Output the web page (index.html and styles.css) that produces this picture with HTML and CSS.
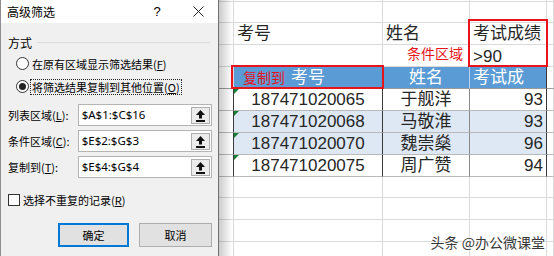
FILE: index.html
```html
<!DOCTYPE html>
<html lang="zh-CN">
<head>
    <meta charset="UTF-8">
    <meta name="viewport" content="width=device-width, initial-scale=1.0">
    <title>高级筛选</title>
    <link rel="stylesheet" href="styles.css">
</head>
<body>
    <div class="sheet">
        <div class="row r-top"><div></div><div></div><div></div><div></div><div></div></div>
        <div class="row r-short"><div></div><div></div><div></div><div></div><div></div></div>
        <div class="row">
            <div></div>
            <div class="cell">考号</div>
            <div class="cell">姓名</div>
            <div class="cell">考试成绩</div>
            <div></div>
        </div>
        <div class="row">
            <div></div>
            <div></div>
            <div class="note-cell"><span class="note">条件区域</span></div>
            <div class="cell raised">&gt;90</div>
            <div></div>
        </div>
        <div class="row head">
            <div class="c0"></div>
            <div class="cell center ca"><span class="note copy-note">复制到</span>考号</div>
            <div class="cell center cb">姓名</div>
            <div class="cell cc">考试成</div>
            <div></div>
        </div>
        <div class="row data">
            <div class="c0"></div>
            <div class="cell center ca flag">187471020065</div>
            <div class="cell center cb">于舰洋</div>
            <div class="cell right cc">93</div>
            <div></div>
        </div>
        <div class="row data alt">
            <div class="c0"></div>
            <div class="cell center ca flag">187471020068</div>
            <div class="cell center cb">马敬淮</div>
            <div class="cell right cc">93</div>
            <div></div>
        </div>
        <div class="row data alt">
            <div class="c0"></div>
            <div class="cell center ca flag">187471020070</div>
            <div class="cell center cb">魏崇燊</div>
            <div class="cell right cc">96</div>
            <div></div>
        </div>
        <div class="row data">
            <div class="c0"></div>
            <div class="cell center ca flag">187471020075</div>
            <div class="cell center cb">周广赞</div>
            <div class="cell right cc">94</div>
            <div></div>
        </div>
        <div class="row r-short"><div></div><div></div><div></div><div></div><div></div></div>
        <div class="row"><div></div><div></div><div></div><div></div><div></div></div>
        <div class="row"><div></div><div></div><div></div><div></div><div></div></div>
        <div class="row r-last"><div></div><div></div><div></div><div></div><div></div></div>

        <div class="mark mark-criteria"></div>
        <div class="mark mark-copy"></div>
    </div>

    <div class="watermark">头条 @办公微课堂</div>

    <div class="dialog">
        <div class="title-bar">
            <span class="title">高级筛选</span>
            <span class="help">?</span>
            <span class="close">
                <svg width="11" height="11" viewBox="0 0 11 11"><path d="M0.5 0.5L10.5 10.5M10.5 0.5L0.5 10.5" stroke="#222" stroke-width="1"/></svg>
            </span>
        </div>
        <div class="dlg-body">
            <div class="group-label">方式</div>
            <div class="radio-row first">
                <span class="radio"></span>
                <span class="radio-text">在原有区域显示筛选结果(<u>F</u>)</span>
            </div>
            <div class="radio-row">
                <span class="radio on"></span>
                <span class="radio-text focus">将筛选结果复制到其他位置(<u>O</u>)</span>
            </div>

            <div class="field-row first">
                <span class="field-label">列表区域(<u>L</u>):</span>
                <div class="field">
                    <span class="field-text">$A$1:$C$16</span>
                    <span class="field-btn">
                        <svg width="9" height="12" viewBox="0 0 9 12"><path d="M4.5 0L9 5H6V8.5H3V5H0Z" fill="#111"/><rect x="0" y="10" width="9" height="2" fill="#111"/></svg>
                    </span>
                </div>
            </div>
            <div class="field-row">
                <span class="field-label">条件区域(<u>C</u>):</span>
                <div class="field">
                    <span class="field-text">$E$2:$G$3</span>
                    <span class="field-btn">
                        <svg width="9" height="12" viewBox="0 0 9 12"><path d="M4.5 0L9 5H6V8.5H3V5H0Z" fill="#111"/><rect x="0" y="10" width="9" height="2" fill="#111"/></svg>
                    </span>
                </div>
            </div>
            <div class="field-row">
                <span class="field-label">复制到(<u>T</u>):</span>
                <div class="field">
                    <span class="field-text">$E$4:$G$4</span>
                    <span class="field-btn">
                        <svg width="9" height="12" viewBox="0 0 9 12"><path d="M4.5 0L9 5H6V8.5H3V5H0Z" fill="#111"/><rect x="0" y="10" width="9" height="2" fill="#111"/></svg>
                    </span>
                </div>
            </div>

            <div class="check-row">
                <span class="check"></span>
                <span>选择不重复的记录(<u>R</u>)</span>
            </div>

            <div class="buttons">
                <span class="btn primary">确定</span>
                <span class="btn">取消</span>
            </div>
        </div>
    </div>
</body>
</html>
```

FILE: styles.css
```css
body {
    margin: 0;
    width: 554px;
    height: 256px;
    overflow: hidden;
    position: relative;
    background-color: #fff;
    font-family: "Liberation Sans", "Noto Sans CJK SC", sans-serif;
}

/* spreadsheet */
.sheet {
    position: relative;
}
.row {
    display: grid;
    grid-template-columns: 234px 149px 87px 77px 1fr;
    height: 22px;
}
.row > div {
    box-sizing: border-box;
    border-right: 1px solid #dadada;
    border-bottom: 1px solid #dadada;
}
.r-top {
    height: 2px;
}
.r-short {
    height: 21px;
}
.r-last {
    height: 14px;
}
.row.r-last > div {
    border-bottom: none;
}
.cell {
    display: flex;
    align-items: center;
    padding: 0 3px;
    font-size: 17px;
    line-height: 21px;
    color: #262626;
    white-space: nowrap;
    overflow: hidden;
    position: relative;
}
.cell.center {
    justify-content: center;
}
.cell.right {
    justify-content: flex-end;
}
.cell.raised {
    padding-top: 2px;
}
.note {
    color: #e8141c;
    font-family: "Noto Sans CJK SC", sans-serif;
    font-size: 14px;
    line-height: 16px;
    white-space: nowrap;
}
.note-cell {
    display: flex;
    justify-content: flex-end;
    align-items: flex-start;
    padding: 0 6px 0 0;
}
.copy-note {
    position: absolute;
    left: 9px;
    top: 2px;
}

.head > .ca,
.head > .cb,
.head > .cc {
    background-color: #5b9bd5;
    color: #fff;
}
.head > .cb {
    border-right-color: #b7d2ec;
}
.head > div {
    border-bottom-color: #9a9a9a;
}
.head > .cc {
    border-right-color: #3a3a3a;
}
.data > div {
    border-bottom-color: #b9b9b9;
}
.data > .c0,
.data > .ca,
.data > .cc {
    border-right-color: #3a3a3a;
}
.data > .cb {
    border-right-color: #8a8a8a;
}
.alt > .ca,
.alt > .cb,
.alt > .cc {
    background-color: #dde8f4;
}
.flag::before {
    content: "";
    position: absolute;
    left: 0;
    top: 0;
    border-top: 5px solid #1a7f37;
    border-right: 5px solid transparent;
}

.mark {
    position: absolute;
    border: 2px solid #e8141c;
    box-sizing: border-box;
}
.mark-criteria {
    left: 468px;
    top: 19px;
    width: 80px;
    height: 48px;
}
.mark-copy {
    left: 231px;
    top: 65px;
    width: 153px;
    height: 24px;
}

.watermark {
    position: absolute;
    right: 9px;
    top: 233px;
    font-family: "Noto Sans CJK SC", sans-serif;
    font-size: 14px;
    line-height: 18px;
    color: #383838;
    text-shadow: 0 0 2px #fff, 0 0 1px #fff;
}

/* dialog window */
.dialog {
    position: absolute;
    left: 0;
    top: 0;
    width: 219px;
    height: 256px;
    box-sizing: border-box;
    background-color: #f0f0f0;
    border-left: 1px solid #8f8f8f;
    border-right: 1px solid #8f8f8f;
    font-family: "Noto Sans CJK SC", sans-serif;
    font-size: 11px;
    color: #000;
}
.dialog::after {
    content: "";
    position: absolute;
    left: 100%;
    top: 0;
    bottom: 0;
    width: 14px;
    background: linear-gradient(to right, rgba(0, 0, 0, 0.22), rgba(0, 0, 0, 0));
}
.title-bar {
    display: flex;
    align-items: center;
    height: 23px;
    padding-left: 6px;
    background-color: #fff;
    font-size: 12px;
}
.title {
    flex: 1;
}
.help {
    width: 20px;
    margin-right: 12px;
    text-align: center;
    font-family: "Liberation Sans", sans-serif;
    font-size: 13px;
}
.close {
    width: 38px;
    margin-right: 1px;
    display: flex;
    justify-content: center;
}

.dlg-body {
    padding: 11px 6px 0 7px;
}
.group-label {
    display: flex;
    align-items: center;
    height: 16px;
    font-size: 12px;
}
.group-label::after {
    content: "";
    flex: 1;
    height: 1px;
    margin: 0 2px 0 5px;
    background-color: #dcdcdc;
}
.radio-row {
    display: flex;
    align-items: center;
    height: 23px;
    padding-left: 8px;
}
.radio-row.first {
    margin-top: 2px;
}
.radio {
    position: relative;
    width: 13px;
    height: 13px;
    box-sizing: border-box;
    border: 1px solid #333;
    border-radius: 50%;
    background-color: #fff;
    margin-right: 1px;
}
.radio.on::after {
    content: "";
    position: absolute;
    left: 2px;
    top: 2px;
    width: 7px;
    height: 7px;
    border-radius: 50%;
    background-color: #222;
}
.radio-text {
    padding: 0 1px;
    line-height: 14px;
    border: 1px dotted transparent;
}
.radio-text.focus {
    border-color: #222;
}

.field-row {
    display: flex;
    align-items: center;
    height: 22px;
    margin-top: 4px;
}
.field-row.first {
    margin-top: 6px;
}
.field-label {
    width: 70px;
}
.field {
    display: flex;
    width: 135px;
    height: 22px;
    box-sizing: border-box;
    border: 1px solid #b4b4b4;
    background-color: #fff;
}
.field-text {
    flex: 1;
    padding-left: 3px;
    font-family: "Noto Sans", sans-serif;
    font-size: 11.5px;
    line-height: 20px;
}
.field-btn {
    display: flex;
    align-items: center;
    justify-content: center;
    width: 19px;
    margin: 2px 1px 1px 0;
    box-sizing: border-box;
    border: 1px solid #adadad;
    background-color: #ececec;
}

.check-row {
    display: flex;
    align-items: center;
    height: 16px;
    margin-top: 14px;
}
.check {
    width: 12px;
    height: 12px;
    box-sizing: border-box;
    border: 1px solid #333;
    background-color: #fff;
    margin-right: 3px;
}

.buttons {
    display: flex;
    gap: 10px;
    margin-top: 15px;
    padding-left: 50px;
}
.btn {
    display: flex;
    align-items: center;
    justify-content: center;
    width: 73px;
    height: 24px;
    box-sizing: border-box;
    border: 1px solid #adadad;
    background-color: #e1e1e1;
}
.btn.primary {
    width: 71px;
    border: 2px solid #0078d7;
}
```
